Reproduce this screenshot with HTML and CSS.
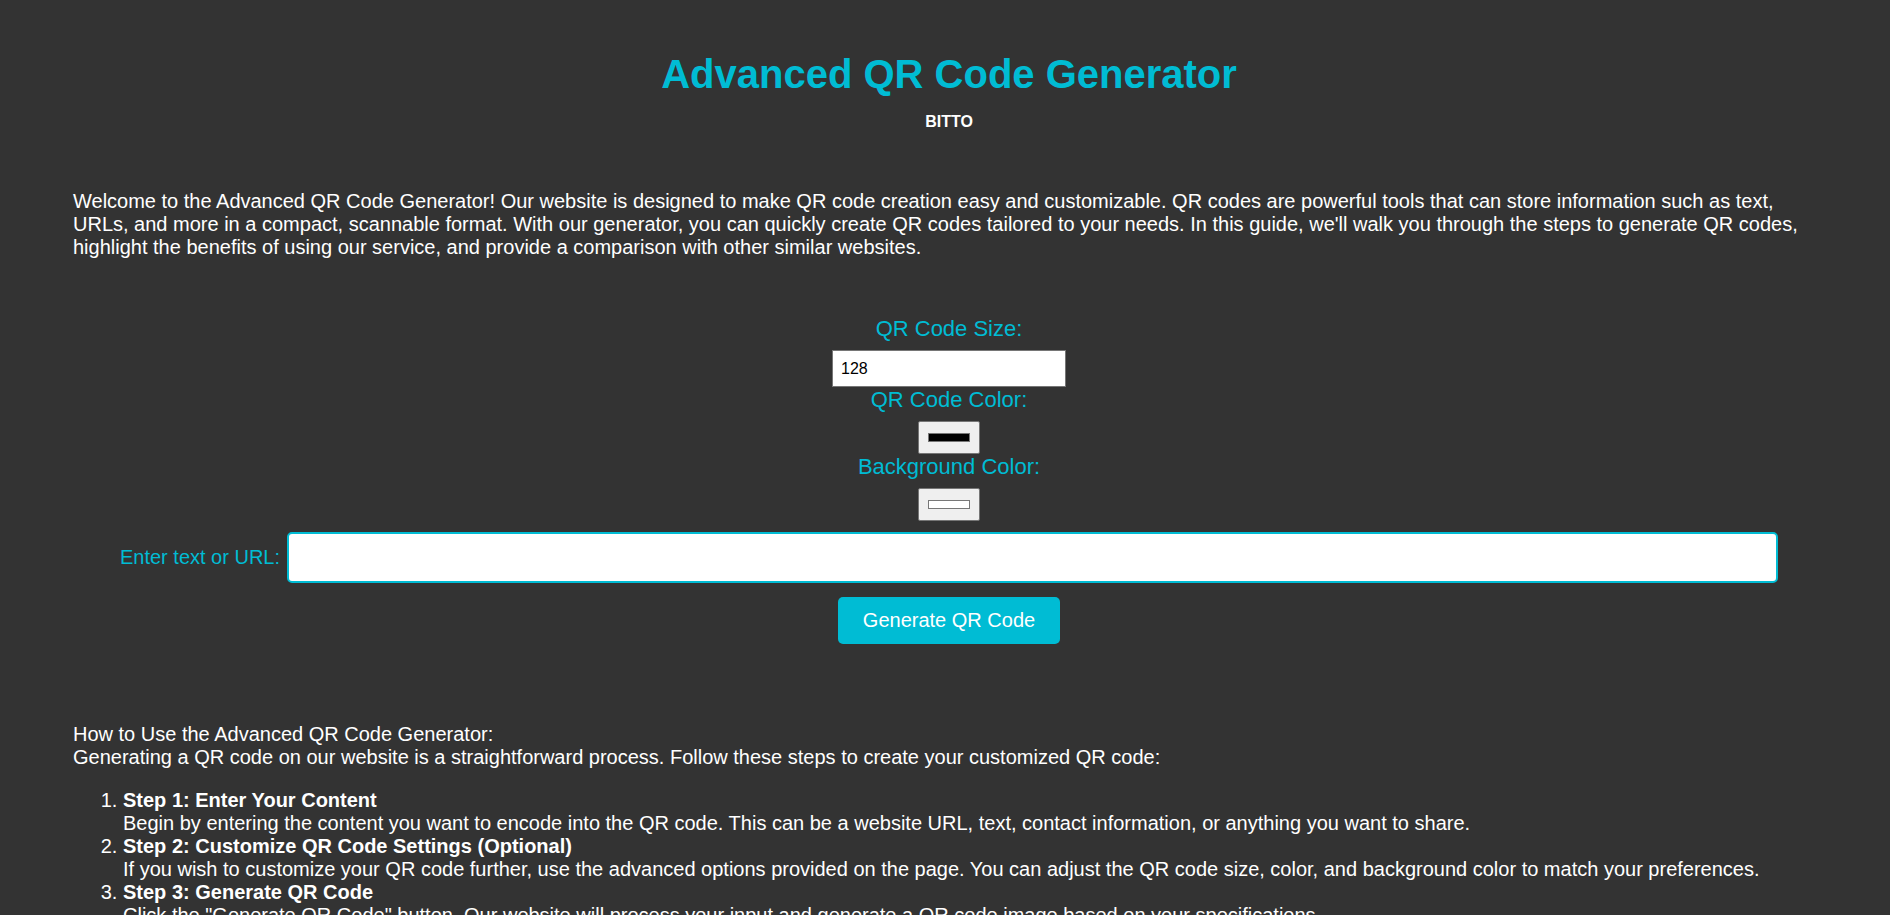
FILE: index.html
```html
<!DOCTYPE html>
<html lang="en">
<head>
<meta charset="utf-8">
<title>Advanced QR Code Generator</title>
<link rel="stylesheet" href="styles.css">
</head>
<body class="page">
  <header class="header">
    <h1 class="title">Advanced QR Code Generator</h1>
    <p class="author">BITTO</p>
  </header>

  <p class="intro">Welcome to the Advanced QR Code Generator! Our website is designed to make QR code creation easy and customizable. QR codes are powerful tools that can store information such as text, URLs, and more in a compact, scannable format. With our generator, you can quickly create QR codes tailored to your needs. In this guide, we'll walk you through the steps to generate QR codes, highlight the benefits of using our service, and provide a comparison with other similar websites.</p>

  <section class="generator">
    <div class="settings">
      <label class="setting-label" for="size">QR Code Size:</label>
      <input class="size-input" id="size" type="number" value="128">
      <label class="setting-label" for="fg">QR Code Color:</label>
      <input class="color-input" id="fg" type="color" value="#000000">
      <label class="setting-label" for="bg">Background Color:</label>
      <input class="color-input" id="bg" type="color" value="#ffffff">
    </div>
    <div class="text-row">
      <label class="text-label" for="text">Enter text or URL:</label>
      <input class="text-input" id="text" type="text">
    </div>
    <button class="generate-btn" type="button">Generate QR Code</button>
  </section>

  <section class="guide">
    <p class="guide-intro">How to Use the Advanced QR Code Generator:<br>Generating a QR code on our website is a straightforward process. Follow these steps to create your customized QR code:</p>
    <ol class="steps">
      <li><strong>Step 1: Enter Your Content</strong><br>Begin by entering the content you want to encode into the QR code. This can be a website URL, text, contact information, or anything you want to share.</li>
      <li><strong>Step 2: Customize QR Code Settings (Optional)</strong><br>If you wish to customize your QR code further, use the advanced options provided on the page. You can adjust the QR code size, color, and background color to match your preferences.</li>
      <li><strong>Step 3: Generate QR Code</strong><br>Click the "Generate QR Code" button. Our website will process your input and generate a QR code image based on your specifications.</li>
    </ol>
  </section>
</body>
</html>
```

FILE: styles.css
```css
* {
  box-sizing: border-box;
}

html {
  background: #333333;
}

.page {
  margin: 0;
  padding: 52px 65px 40px 73px;
  background: #333333;
  color: #ffffff;
  font-family: "Liberation Sans", Arial, sans-serif;
  font-size: 20px;
}

.header {
  text-align: center;
}

.title {
  margin: 0;
  font-size: 40px;
  font-weight: bold;
  color: #00bcd4;
}

.author {
  margin: 16px 0 0;
  font-size: 16px;
  font-weight: bold;
}

.intro {
  margin: 59px 0 0;
}

.generator {
  margin-top: 57px;
  display: flex;
  flex-direction: column;
  align-items: center;
}

.settings {
  display: flex;
  flex-direction: column;
  align-items: center;
}

.setting-label {
  display: block;
  margin-bottom: 8px;
  font-size: 22px;
  color: #00bcd4;
}

.size-input {
  width: 234px;
  height: 37px;
  padding: 0 8px;
  border: 1px solid #767676;
  border-radius: 0;
  background: #ffffff;
  color: #000000;
  font-family: "Liberation Sans", Arial, sans-serif;
  font-size: 16px;
  -moz-appearance: textfield;
}

.size-input::-webkit-inner-spin-button,
.size-input::-webkit-outer-spin-button {
  -webkit-appearance: none;
  margin: 0;
}

.color-input {
  -webkit-appearance: none;
  appearance: none;
  width: 62px;
  height: 33px;
  padding: 0;
  border: 1px solid #767676;
  border-radius: 2px;
  background: #efefef;
  cursor: pointer;
}

.color-input::-webkit-color-swatch-wrapper {
  padding: 11px 9px;
}

.color-input::-webkit-color-swatch {
  border: 1px solid #777777;
  border-radius: 0;
}

.text-row {
  margin-top: 11px;
  display: flex;
  align-items: center;
  gap: 7px;
}

.text-label {
  font-size: 20px;
  color: #00bcd4;
}

.text-input {
  width: 1491px;
  height: 51px;
  padding: 0 10px;
  border: 2px solid #00bcd4;
  border-radius: 5px;
  background: #ffffff;
  font-family: "Liberation Sans", Arial, sans-serif;
  font-size: 16px;
}

.generate-btn {
  margin-top: 14px;
  padding: 12px 25px;
  border: none;
  border-radius: 5px;
  background: #00bcd4;
  color: #ffffff;
  font-family: "Liberation Sans", Arial, sans-serif;
  font-size: 20px;
  cursor: pointer;
}

.guide {
  margin-top: 79px;
}

.guide-intro {
  margin: 0;
}

.steps {
  margin: 20px 0 0;
  padding-left: 50px;
}
```
